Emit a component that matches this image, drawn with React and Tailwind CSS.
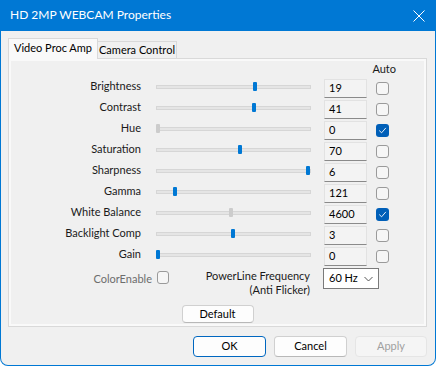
import React from 'react';

const font = { fontFamily: 'Lato, "Noto Sans", sans-serif' };

const rows = [
  { label: 'Brightness', pos: 97, value: '19' },
  { label: 'Contrast', pos: 96, value: '41' },
  { label: 'Hue', pos: 0, value: '0', auto: true },
  { label: 'Saturation', pos: 82, value: '70' },
  { label: 'Sharpness', pos: 150, value: '6' },
  { label: 'Gamma', pos: 17, value: '121' },
  { label: 'White Balance', pos: 73, value: '4600', auto: true },
  { label: 'Backlight Comp', pos: 75, value: '3' },
  { label: 'Gain', pos: 0, value: '0' },
];

const Checkbox = ({ checked, size = 'w-[13px] h-[13px]' }) =>
  checked ? (
    <div className={`${size} rounded-[3px] bg-[#005fb8] flex items-center justify-center`}>
      <svg width="9" height="9" viewBox="0 0 9 9" fill="none">
        <path d="M1.5 4.8 L3.6 6.8 L7.6 2.2" stroke="white" strokeWidth="0.9" strokeLinecap="round" strokeLinejoin="round" />
      </svg>
    </div>
  ) : (
    <div className={`${size} rounded-[3px] border border-[#9a9a9a] bg-[#f6f6f6]`} />
  );

const Slider = ({ pos, disabled }) => (
  <div className="relative ml-[15px] w-[155px] h-[9px] mb-[4px] flex items-center">
    <div className="w-full h-[4px] bg-[#e5e5e5] border border-[#d6d6d6]" />
    <div
      className={`absolute top-0 w-[4px] h-[9px] rounded-[1px] ${disabled ? 'bg-[#cccccc]' : 'bg-[#0078d4]'}`}
      style={{ left: pos }}
    />
  </div>
);

const Row = ({ label, pos, value, auto }) => (
  <div className="flex items-center h-[21px]">
    <div className="w-[130px] text-right text-[11px] leading-[14px] text-[#1a1a1a] mb-[5px] whitespace-nowrap">{label}</div>
    <Slider pos={pos} disabled={auto} />
    <div className="ml-[13px] w-[43px] h-[19px] border border-[#e2e2e2] border-b-[#8a8a8a] bg-[#f3f3f3] pl-[4px] flex items-center text-[11px] text-black">
      {value}
    </div>
    <div className="ml-[9px]">
      <Checkbox checked={auto} />
    </div>
  </div>
);

const Button = ({ children, primary, disabled, className = '' }) => (
  <div
    className={`flex items-center justify-center rounded-[4px] text-[11px] ${className} ${
      disabled
        ? 'bg-[#f5f5f5] border border-[#e5e5e5] text-[#a0a0a0]'
        : primary
        ? 'bg-[#fdfdfd] border border-[#0067c0] text-black'
        : 'bg-[#fdfdfd] border border-[#d0d0d0] border-b-[#b8b8b8] text-black'
    }`}
  >
    {children}
  </div>
);

export default function App() {
  return (
    <div className="w-[436px] h-[366px] bg-[#0078d4] rounded-b-[8px] flex flex-col px-[1px] pb-[1px]" style={font}>
      {/* title bar */}
      <div className="h-[31px] flex items-center justify-between pl-[9px] pr-[10px] text-white text-[12px]">
        <span className="mb-[1px]">HD 2MP WEBCAM Properties</span>
        <svg width="12" height="12" viewBox="0 0 12 12" className="mt-[1px]">
          <path d="M0.5 0.5 L11.5 11.5 M11.5 0.5 L0.5 11.5" stroke="white" strokeWidth="1" />
        </svg>
      </div>

      <div className="flex-1 bg-[#f0f0f0] rounded-b-[7px] flex flex-col px-[7px] pt-[7px]">
        {/* tabs */}
        <div className="flex items-end h-[20px]">
          <div className="relative z-10 h-[21px] w-[90px] -mb-[1px] bg-[#f9f9f9] border border-b-0 border-[#d9d9d9] flex items-center justify-center text-[11px] text-black pb-[1px] whitespace-nowrap">
            Video Proc Amp
          </div>
          <div className="h-[17px] w-[80px] -ml-[1px] bg-[#f0f0f0] border border-b-0 border-[#d9d9d9] flex items-center justify-center text-[11px] text-black whitespace-nowrap">
            Camera Control
          </div>
        </div>

        {/* panel */}
        <div className="w-[419px] h-[269px] border border-[#d9d9d9] bg-[#f9f9f9] p-[2px]">
          <div className="h-full bg-[#f0f0f0] flex flex-col">
            <div className="h-[17px] flex items-center justify-end pr-[28px] text-[11px] text-[#1a1a1a]">Auto</div>
            {rows.map((r) => (
              <Row key={r.label} {...r} />
            ))}

            <div className="flex items-start mt-[1px]">
              <div className="w-[141px] text-right text-[11px] leading-[14px] text-[#6d6d6d] pt-[4px]">ColorEnable</div>
              <div className="ml-[5px] mt-[3px]">
                <Checkbox size="w-[12px] h-[13px]" />
              </div>
              <div className="w-[141px] text-right text-[11px] leading-[14px] text-[#1a1a1a] pt-[1px]">
                PowerLine Frequency
                <br />
                (Anti Flicker)
              </div>
              <div className="ml-[13px] w-[56px] h-[21px] bg-white border border-[#7a7a7a] flex items-center justify-between pl-[5px] pr-[5px] text-[11px] text-black">
                <span>60 Hz</span>
                <svg width="9" height="6" viewBox="0 0 9 6">
                  <path d="M0.5 1 L4.5 5 L8.5 1" stroke="#444" strokeWidth="0.9" fill="none" />
                </svg>
              </div>
            </div>

            <div className="flex justify-center mt-[8px]">
              <Button className="w-[72px] h-[18px]">Default</Button>
            </div>
          </div>
        </div>

        {/* dialog buttons */}
        <div className="flex justify-end gap-[8px] mt-[9px] pr-[1px]">
          <Button primary className="w-[73px] h-[21px]">OK</Button>
          <Button className="w-[73px] h-[21px]">Cancel</Button>
          <Button disabled className="w-[72px] h-[21px]">Apply</Button>
        </div>
      </div>
    </div>
  );
}
